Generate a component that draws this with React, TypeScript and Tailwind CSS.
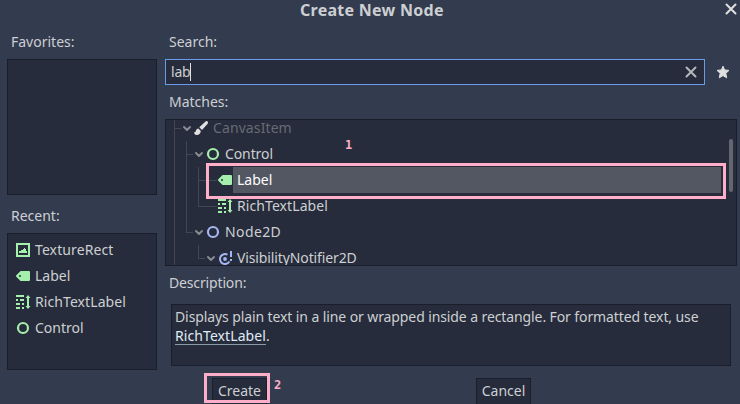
import type { ReactNode } from "react";

type IconName = "brush" | "ring" | "ring2d" | "tag" | "rich" | "texture" | "notifier";
type Guide = "none" | "line" | "tee" | "elbow";

const GREEN = "#a5efac";
const BLUE = "#a5b7f3";

function Icon({ name }: { name: IconName }) {
  return (
    <svg width="16" height="16" viewBox="0 0 16 16" className="shrink-0">
      {name === "brush" && (
        <path
          fill="#e0e0e0"
          d="M13.600 1.100c-.4 0-.8.2-1.100.4L6.300 7.200 9 9.900l5.700-6.200c.9-1.100 0-2.600-1.100-2.600zM5.400 8.400c-1.200 0-2 .8-2.400 2-.3 1-.7 1.700-1.900 1.900 0 1.700 1 2.700 2.700 2.600 2.400-.1 4-1.700 4-4z"
        />
      )}
      {name === "ring" && <circle cx="8" cy="8" r="5" fill="none" stroke={GREEN} strokeWidth="2.200" />}
      {name === "ring2d" && <circle cx="8" cy="8" r="5" fill="none" stroke={BLUE} strokeWidth="2.200" />}
      {name === "tag" && (
        <path
          fill={GREEN}
          fillRule="evenodd"
          d="M6 3a1 1 0 0 0-.7.3l-4 4a1 1 0 0 0 0 1.400l4 4A1 1 0 0 0 6 13h8a1 1 0 0 0 1-1V4a1 1 0 0 0-1-1zM5 7a1 1 0 0 1 0 2 1 1 0 0 1 0-2z"
        />
      )}
      {name === "rich" && (
        <path
          fill={GREEN}
          d="M1 1h8v2H1zM1 5h2v2H1zM5 5h4v2H5zM1 9h4v2H1zM7 9h2v2H7zM1 13h4v2H1zM7 13h2v2H7zM13 1l2.500 3H14v8h1.500L13 15l-2.500-3H12V4h-1.500z"
        />
      )}
      {name === "texture" && (
        <path fill={GREEN} fillRule="evenodd" d="M1 1h14v14H1zM3 3v10h10V3zM9 6h1v1h1v2h1v2H4V9h2V8h2V7h1z" />
      )}
      {name === "notifier" && (
        <>
          <path fill={BLUE} d="M13 1h2v6h-2zM13 9h2v2h-2z" />
          <path d="M10.500 4.670A5 5 0 1 0 12.330 11.500" fill="none" stroke={BLUE} strokeWidth="2" />
          <circle cx="8" cy="9" r="1.900" fill={BLUE} />
        </>
      )}
    </svg>
  );
}

function Guides({ guides, leaf }: { guides: Guide[]; leaf?: boolean }) {
  return (
    <>
      {guides.map((g, i) => {
        const last = i === guides.length - 1;
        const width = !last ? "w-3" : leaf ? "w-[19px]" : "w-2";
        return (
          <span key={i} className={`flex h-full shrink-0 ${width}`}>
            {g !== "none" && (
              <span className={`w-px bg-[#414754] ${g === "elbow" ? "h-[14px]" : "h-full"}`} />
            )}
            {last && <span className={`mt-[13px] h-px bg-[#414754] ${leaf ? "flex-1" : "w-[6px]"}`} />}
          </span>
        );
      })}
    </>
  );
}

interface RowProps {
  guides: Guide[];
  icon: IconName;
  label: string;
  leaf?: boolean;
  selected?: boolean;
  spacing?: string;
  color?: string;
}

function TreeRow({ guides, icon, label, leaf, selected, spacing = "", color = "text-[#cdcfd2]" }: RowProps) {
  return (
    <div className="flex h-[26px] shrink-0 items-center pl-2">
      <Guides guides={guides} leaf={leaf} />
      {!leaf && (
        <svg width="10" height="10" viewBox="0 0 10 10" className="mr-px shrink-0">
          <path d="M2 4l3 3 3-3" fill="none" stroke="#878b93" strokeWidth="2" strokeLinecap="round" strokeLinejoin="round" />
        </svg>
      )}
      <Icon name={icon} />
      <span
        className={`flex h-full flex-1 items-center pb-[2px] pl-1 ${selected ? "mr-[15px] bg-[#535762] text-white" : color} ${spacing}`}
      >
        {label}
      </span>
    </div>
  );
}

function Recent({ icon, children, spacing = "" }: { icon: IconName; children: ReactNode; spacing?: string }) {
  return (
    <div className={`flex h-[26px] items-center gap-1 pl-[7px] ${spacing}`}>
      <Icon name={icon} />
      <span className="pb-[2px]">{children}</span>
    </div>
  );
}

function Cross({ color, className }: { color: string; className: string }) {
  return (
    <svg width="12" height="12" viewBox="0 0 12 12" className={className}>
      <path d="M1.500 1.500l9 9M10.500 1.500l-9 9" stroke={color} strokeWidth="2" strokeLinecap="round" />
    </svg>
  );
}

const box = "border border-[#191e2a] bg-[#262c3b]";
const button = `h-[27px] w-[55px] shrink-0 pb-[2px] ${box}`;

export default function App() {
  return (
    <div className="relative flex h-[404px] w-[740px] flex-col overflow-hidden bg-[#333b4f] font-['Noto_Sans',sans-serif] text-[14px] leading-[19px] text-[#cdcfd2]">
      <header className="flex h-[31px] shrink-0 items-start pl-[300px] pr-[3px]">
        <h1 className="flex-1 whitespace-nowrap text-[16px] font-bold leading-[21px] tracking-[0.27px]">Create New Node</h1>
        <Cross color="#e0e0e0" className="mt-[3px]" />
      </header>

      <main className="flex h-[339px] shrink-0 gap-2 pl-[7px] pr-[3px]">
        <aside className="flex w-[150px] flex-col">
          <h2 className="h-7 pl-1 pt-px">Favorites:</h2>
          <div className={`h-[136px] ${box}`} />
          <h2 className="h-[38px] pl-1 pt-[11px]">Recent:</h2>
          <div className={`h-[137px] pt-[3px] ${box}`}>
            <Recent icon="texture" spacing="tracking-[0.1px]">TextureRect</Recent>
            <Recent icon="tag">Label</Recent>
            <Recent icon="rich" spacing="tracking-[0.08px]">RichTextLabel</Recent>
            <Recent icon="ring">Control</Recent>
          </div>
        </aside>

        <section className="flex flex-1 flex-col">
          <h2 className="h-7 pl-1 pt-px">Search:</h2>
          <div className="flex h-[26px] items-center">
            <div className="flex h-full w-[540px] items-center border border-[#699ce8] bg-[#262c3b] pl-[5px] pr-[7px]">
              <span className="-ml-px pb-[2px] pl-px tracking-[-0.2px]">lab</span>
              <span className="h-[18px] w-px bg-[#e0e0e0]" />
              <Cross color="#b5b7bb" className="ml-auto" />
            </div>
            <svg width="16" height="16" viewBox="0 0 16 16" className="ml-[10px]">
              <path
                fill="#e0e0e0"
                stroke="#e0e0e0"
                strokeLinejoin="round"
                d="M8 2.200l1.600 3.700 4.400.5-3.200 2.900.9 4.500L8 11.600l-3.700 2.200.9-4.500L2 6.400l4.400-.5z"
              />
            </svg>
          </div>
          <h2 className="h-[34px] pl-1 pt-[7px]">Matches:</h2>
          <div className={`relative flex h-[147px] flex-col overflow-hidden ${box}`}>
            <div className="-mt-[5px] flex flex-col">
              <TreeRow guides={["tee"]} icon="brush" label="CanvasItem" color="text-[#666b75]" spacing="tracking-[0.1px]" />
              <TreeRow guides={["line", "tee"]} icon="ring" label="Control" spacing="tracking-[-0.1px]" />
              <TreeRow guides={["line", "line", "tee"]} icon="tag" label="Label" leaf selected />
              <TreeRow guides={["line", "line", "elbow"]} icon="rich" label="RichTextLabel" leaf spacing="tracking-[0.08px]" />
              <TreeRow guides={["line", "elbow"]} icon="ring2d" label="Node2D" spacing="tracking-[0.4px]" />
              <TreeRow guides={["line", "none", "elbow"]} icon="notifier" label="VisibilityNotifier2D" spacing="tracking-[-0.12px]" />
            </div>
            <span className="absolute right-[3px] top-[19px] h-[53px] w-1 rounded-full bg-[#626671]" />
          </div>
          <h2 className="h-[38px] pl-1 pt-[7px] tracking-[-0.15px]">Description:</h2>
          <div className={`mx-[6px] h-[62px] whitespace-nowrap pl-[3px] pt-[2px] ${box}`}>
            <p className="tracking-[-0.1px]">
              Displays plain text in a line or wrapped inside a rectangle. For formatted text, use
            </p>
            <p>
              <a className="inline-block h-[19px] border-b border-[#8b9aa8] tracking-[0.08px] text-[#e0ebf8]">RichTextLabel</a>.
            </p>
          </div>
        </section>
      </main>

      <footer className="flex h-[34px] shrink-0 gap-[209px] pl-[212px] pt-2">
        <button className={button}>Create</button>
        <button className={button}>Cancel</button>
      </footer>

      <div className="absolute left-[206px] top-[163px] h-9 w-[520px] border-[3px] border-[#ffaec9]" />
      <div className="absolute left-[204px] top-[373px] h-[30px] w-[66px] border-[3px] border-[#ffaec9]" />
      <span className="absolute left-[345px] top-[136px] font-['DejaVu_Sans_Mono',monospace] text-[12px] font-bold text-[#ffaec9]">1</span>
      <span className="absolute left-[274px] top-[376px] font-['DejaVu_Sans_Mono',monospace] text-[12px] font-bold text-[#ffaec9]">2</span>
    </div>
  );
}
